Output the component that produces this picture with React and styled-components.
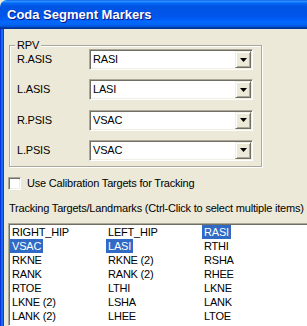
import React from "react";
import styled, { createGlobalStyle } from "styled-components";

const Global = createGlobalStyle`
  html, body { margin: 0; padding: 0; background: #ECE9D8; overflow: hidden; }
  body { font-family: "Liberation Sans", Arial, sans-serif; font-size: 11px; letter-spacing: -0.2px; color: #000; }
  * { box-sizing: border-box; }
`;

const Window = styled.div`
  width: 307px;
  height: 326px;
  display: flex;
  flex-direction: column;
  overflow: hidden;
`;

const TitleBar = styled.div`
  flex: 0 0 29px;
  height: 29px;
  padding: 1px 0 0 7px;
  border-top-left-radius: 7px;
  background: linear-gradient(
    to bottom,
    #0058ee 0%,
    #3593ff 4%,
    #288eff 6%,
    #127dff 8%,
    #036ffc 10%,
    #0262ee 14%,
    #0057e5 20%,
    #0054e3 24%,
    #0055eb 56%,
    #005bf5 66%,
    #026afe 76%,
    #0062ef 86%,
    #0052d6 92%,
    #0040ab 94%,
    #003092 100%
  );
`;

const Title = styled.span`
  font-family: "Liberation Sans", Arial, sans-serif;
  font-weight: bold;
  font-size: 13px;
  letter-spacing: 0;
  line-height: 28px;
  color: #fff;
  text-shadow: 1px 1px 0 #0a1883;
  white-space: nowrap;
`;

const Frame = styled.div`
  flex: 1;
  display: flex;
  min-height: 0;
  padding-left: 4px;
  background: linear-gradient(
    to right,
    #0831d9 0px,
    #0831d9 1px,
    #166aee 1px,
    #166aee 3px,
    #0842d9 3px,
    #0842d9 4px
  );
`;

const Content = styled.div`
  flex: 1;
  display: flex;
  flex-direction: column;
  min-width: 0;
  overflow: hidden;
  background: #ece9d8;
  padding: 16px 0 0 4px;
`;

const GroupBox = styled.div`
  position: relative;
  margin-left: 1px;
  width: 253px;
  padding: 3px 0 5px 7px;
  border: 1px solid #aca899;
  box-shadow: inset 1px 1px 0 #fff, 1px 1px 0 #fff;
  display: flex;
  flex-direction: column;
  gap: 9.33px;
`;

const GroupLegend = styled.span`
  position: absolute;
  top: -7px;
  left: 5px;
  padding: 0 2px;
  line-height: 13px;
  background: #ece9d8;
`;

const FieldRow = styled.div`
  display: flex;
  align-items: center;
  height: 21px;
`;

const FieldLabel = styled.span`
  width: 72px;
  flex-shrink: 0;
  line-height: 13px;
`;

const Combo = styled.div`
  width: 164px;
  height: 21px;
  display: flex;
  align-items: center;
  background: #fff;
  border: 1px solid;
  border-color: #aca899 #fff #fff #aca899;
  box-shadow: inset 1px 1px 0 #716f64, inset -1px -1px 0 #f1efe2;
  padding: 1px;
`;

const ComboValue = styled.span`
  flex: 1;
  padding-left: 2px;
  line-height: 13px;
`;

const DropButton = styled.span`
  width: 16px;
  height: 17px;
  display: flex;
  align-items: center;
  justify-content: center;
  background: #ece9d8;
  border: 1px solid;
  border-color: #f1efe2 #716f64 #716f64 #f1efe2;
  box-shadow: inset 1px 1px 0 #fff, inset -1px -1px 0 #aca899;
`;

const CheckRow = styled.label`
  display: flex;
  align-items: center;
  height: 13px;
  margin-top: 10px;
`;

const CheckBox = styled.span`
  width: 13px;
  height: 13px;
  flex-shrink: 0;
  background: #fff;
  border: 1px solid;
  border-color: #aca899 #fff #fff #aca899;
  box-shadow: inset 1px 1px 0 #716f64, inset -1px -1px 0 #f1efe2;
`;

const CheckLabel = styled.span`
  margin-left: 6px;
  line-height: 13px;
  white-space: nowrap;
`;

const ListCaption = styled.div`
  margin-top: 12px;
  padding-left: 1px;
  line-height: 13px;
  white-space: nowrap;
`;

const ListBox = styled.div`
  margin-top: 8px;
  margin-right: -8px;
  flex: 1;
  background: #fff;
  border: 1px solid;
  border-color: #aca899 #fff #fff #aca899;
  box-shadow: inset 1px 1px 0 #716f64;
  padding: 1px 0 0 1px;
  overflow: hidden;
`;

const ListGrid = styled.div`
  display: grid;
  grid-template-columns: repeat(3, 96px);
  grid-auto-rows: 14px;
`;

const ListItem = styled.span`
  justify-self: start;
  padding: 0 2px;
  line-height: 14px;
  height: 14px;
  white-space: nowrap;
  background: ${(p) => (p.$selected ? "#316ac5" : "transparent")};
  color: ${(p) => (p.$selected ? "#fff" : "#000")};
`;

const fields = [
  { label: "R.ASIS", value: "RASI" },
  { label: "L.ASIS", value: "LASI" },
  { label: "R.PSIS", value: "VSAC" },
  { label: "L.PSIS", value: "VSAC" },
];

const items = [
  ["RIGHT_HIP", false],
  ["LEFT_HIP", false],
  ["RASI", true],
  ["VSAC", true],
  ["LASI", true],
  ["RTHI", false],
  ["RKNE", false],
  ["RKNE (2)", false],
  ["RSHA", false],
  ["RANK", false],
  ["RANK (2)", false],
  ["RHEE", false],
  ["RTOE", false],
  ["LTHI", false],
  ["LKNE", false],
  ["LKNE (2)", false],
  ["LSHA", false],
  ["LANK", false],
  ["LANK (2)", false],
  ["LHEE", false],
  ["LTOE", false],
];

function Arrow() {
  return (
    <svg width="7" height="4" viewBox="0 0 7 4">
      <path d="M0 0h7L3.5 4z" fill="#000" />
    </svg>
  );
}

export default function App() {
  return (
    <>
      <Global />
      <Window>
        <TitleBar>
          <Title>Coda Segment Markers</Title>
        </TitleBar>
        <Frame>
          <Content>
            <GroupBox>
              <GroupLegend>RPV</GroupLegend>
              {fields.map((f) => (
                <FieldRow key={f.label}>
                  <FieldLabel>{f.label}</FieldLabel>
                  <Combo>
                    <ComboValue>{f.value}</ComboValue>
                    <DropButton>
                      <Arrow />
                    </DropButton>
                  </Combo>
                </FieldRow>
              ))}
            </GroupBox>
            <CheckRow>
              <CheckBox />
              <CheckLabel>Use Calibration Targets for Tracking</CheckLabel>
            </CheckRow>
            <ListCaption>
              Tracking Targets/Landmarks (Ctrl-Click to select multiple items)
            </ListCaption>
            <ListBox>
              <ListGrid>
                {items.map(([name, sel]) => (
                  <ListItem key={name} $selected={sel}>
                    {name}
                  </ListItem>
                ))}
              </ListGrid>
            </ListBox>
          </Content>
        </Frame>
      </Window>
    </>
  );
}
